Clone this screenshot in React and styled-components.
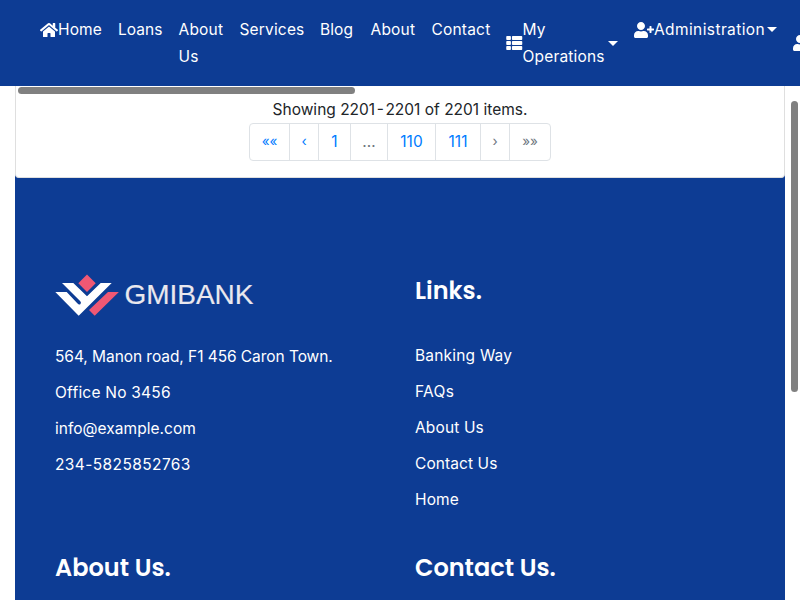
import React from "react";
import styled, { createGlobalStyle } from "styled-components";
import { FaHome, FaThList, FaUserPlus, FaUser } from "react-icons/fa";

const GlobalStyle = createGlobalStyle`
  * { box-sizing: border-box; }
  html, body { margin: 0; height: 100%; overflow: hidden; background: #fff; }
  body { font-family: Inter, "Liberation Sans", sans-serif; font-size: 15.5px; font-weight: 390; line-height: 27px; color: #212529; }
  ul { list-style: none; margin: 0; padding: 0; }
  a { color: inherit; text-decoration: none; }
`;

const Page = styled.div`
  height: 600px;
  overflow: hidden;
  display: flex;
  flex-direction: column;
`;

const Navbar = styled.nav`
  flex: none;
  height: 86px;
  padding: 16px 0 0 40px;
  background: #0d3c94;
  color: #fff;
  display: flex;
  gap: 16px;
  overflow: hidden;
`;

const NavItem = styled.a`
  flex: none;
  width: ${(p) => p.$w}px;
  height: ${(p) => (p.$tall ? 54 : 27)}px;
  display: flex;
  align-items: center;
  white-space: nowrap;
  svg {
    flex: none;
    width: ${(p) => p.$icon}px;
    height: 16px;
  }
`;

const Label = styled.span`
  letter-spacing: ${(p) => p.$track || 0}px;
  white-space: nowrap;
`;

const NavText = styled.div`
  flex: 1;
  min-width: 0;
`;

const Caret = styled.i`
  flex: none;
  border: 5px solid transparent;
  border-top-color: #fff;
  border-bottom: 0;
`;

const Main = styled.main`
  flex: 1;
  min-height: 0;
  margin: 0 15px;
  background: #0d3c94;
`;

const Card = styled.section`
  height: 92px;
  padding-top: 10px;
  background: #fff;
  border: 1px solid #dfdfdf;
  border-top: 0;
  border-radius: 0 0 4px 4px;
  display: flex;
  flex-direction: column;
  align-items: center;
`;

const Dash = styled.span`
  word-spacing: -2.8px;
`;

const Pagination = styled.ul`
  display: flex;
  height: 38px;
  border: 1px solid #dee2e6;
  border-radius: 4px;
`;

const PageItem = styled.li`
  width: ${(p) => p.$w}px;
  padding-bottom: 2px;
  color: ${(p) => (p.$muted ? "#6c757d" : "#007bff")};
  font-size: ${(p) => (p.$arrow ? 13.5 : 15.5)}px;
  display: flex;
  align-items: center;
  justify-content: center;
  & + & { border-left: 1px solid #dee2e6; }
`;

const Footer = styled.footer`
  padding: 95px 40px 0;
  color: #fff;
  display: grid;
  grid-template-columns: 360px 330px;
  grid-template-rows: 277px 60px;
`;

const Heading = styled.h3`
  margin: 0;
  font: 600 24px/36px Poppins, Inter, sans-serif;
  white-space: nowrap;
`;

const Brand = styled.div`
  height: 46px;
  display: flex;
  svg { display: block; }
`;

const List = styled.ul`
  margin-top: ${(p) => p.$top}px;
  line-height: 36px;
`;

const Thumb = styled.div`
  position: fixed;
  left: ${(p) => p.$x}px;
  top: ${(p) => p.$y}px;
  width: ${(p) => p.$w}px;
  height: ${(p) => p.$h}px;
  border-radius: 4px;
  background: #808080;
`;

const nav = [
  { t: ["Home"], w: 62, icon: FaHome, iw: 18, k: 0.15 },
  { t: ["Loans"], w: 44.5, k: 0.05 },
  { t: ["About", "Us"], w: 45, k: 0.2 },
  { t: ["Services"], w: 64.5, k: 0.17 },
  { t: ["Blog"], w: 34.5, k: 0.1 },
  { t: ["About"], w: 45, k: 0.2 },
  { t: ["Contact"], w: 58.5, k: 0.2 },
  { t: ["My", "Operations"], w: 112, icon: FaThList, iw: 16.5, caret: true, k: 0.17 },
  { t: ["Administration"], w: 143, icon: FaUserPlus, iw: 20, caret: true, k: 0.4 },
  { t: ["", ""], w: 100, icon: FaUser, iw: 14, k: 0 },
];

const pages = [
  { t: "««", w: 39, arrow: true },
  { t: "‹", w: 29, arrow: true },
  { t: "1", w: 32 },
  { t: "…", w: 37, muted: true },
  { t: "110", w: 48 },
  { t: "111", w: 45 },
  { t: "›", w: 29, arrow: true, muted: true },
  { t: "»»", w: 41, arrow: true, muted: true },
];

const address = [
  ["564, Manon road, F1 456 Caron Town.", -0.06],
  ["Office No 3456", 0.22],
  ["info@example.com", 0.03],
  ["234-5825852763", 0.4],
];

const links = [
  ["Banking Way", 0.2],
  ["FAQs", 0.35],
  ["About Us", 0.14],
  ["Contact Us", 0.08],
  ["Home", 0.15],
];

function Logo() {
  return (
    <svg width="200" height="46" viewBox="0 0 200 46">
      <path fill="#ef5874" d="M32 1.600l8.700 8.600-8.700 8.700-8.700-8.700zM53 19h10.900L39.700 42.700l-5.700-5.700z" />
      <path fill="#fff" d="M7 10h11.300L32 23.200 45.700 10h11L23.700 42.700.3 19h11.400l10.600 11.300q1.700 1.800 3 .9 1.400-1.200 0-2.900z" />
      <text x="69.500" y="30.500" fontFamily="Liberation Sans" fontSize="28" fontWeight="400" fill="#eae8ee" stroke="#eae8ee" strokeWidth="0.150" textLength="129">GMIBANK</text>
    </svg>
  );
}

export default function App() {
  return (
    <Page>
      <GlobalStyle />
      <Navbar>
        {nav.map(({ t, w, icon: Icon, iw, caret, k }, i) => (
          <NavItem key={i} href="#" $w={w} $icon={iw} $tall={t.length > 1}>
            {Icon && <Icon />}
            <NavText>
              {t.map((line, j) => (
                <Label key={j} as="div" $track={k}>{line}</Label>
              ))}
            </NavText>
            {caret && <Caret />}
          </NavItem>
        ))}
      </Navbar>
      <Main>
        <Card>
          <Label>Showing <Dash>2201 - 2201</Dash> of 2201 items.</Label>
          <Pagination>
            {pages.map(({ t, w, arrow, muted }) => (
              <PageItem key={t} $w={w} $arrow={arrow} $muted={muted}>{t}</PageItem>
            ))}
          </Pagination>
        </Card>
        <Footer>
          <div>
            <Brand><Logo /></Brand>
            <List $top={20}>
              {address.map(([t, k]) => <li key={t}><Label $track={k}>{t}</Label></li>)}
            </List>
          </div>
          <div>
            <Heading>Links.</Heading>
            <List $top={29}>
              {links.map(([t, k]) => <li key={t}><Label $track={k}>{t}</Label></li>)}
            </List>
          </div>
          <Heading>About Us.</Heading>
          <Heading>Contact Us.</Heading>
        </Footer>
      </Main>
      <Thumb $x={18} $y={87} $w={337} $h={7} />
      <Thumb $x={791} $y={101} $w={7} $h={291} />
    </Page>
  );
}
